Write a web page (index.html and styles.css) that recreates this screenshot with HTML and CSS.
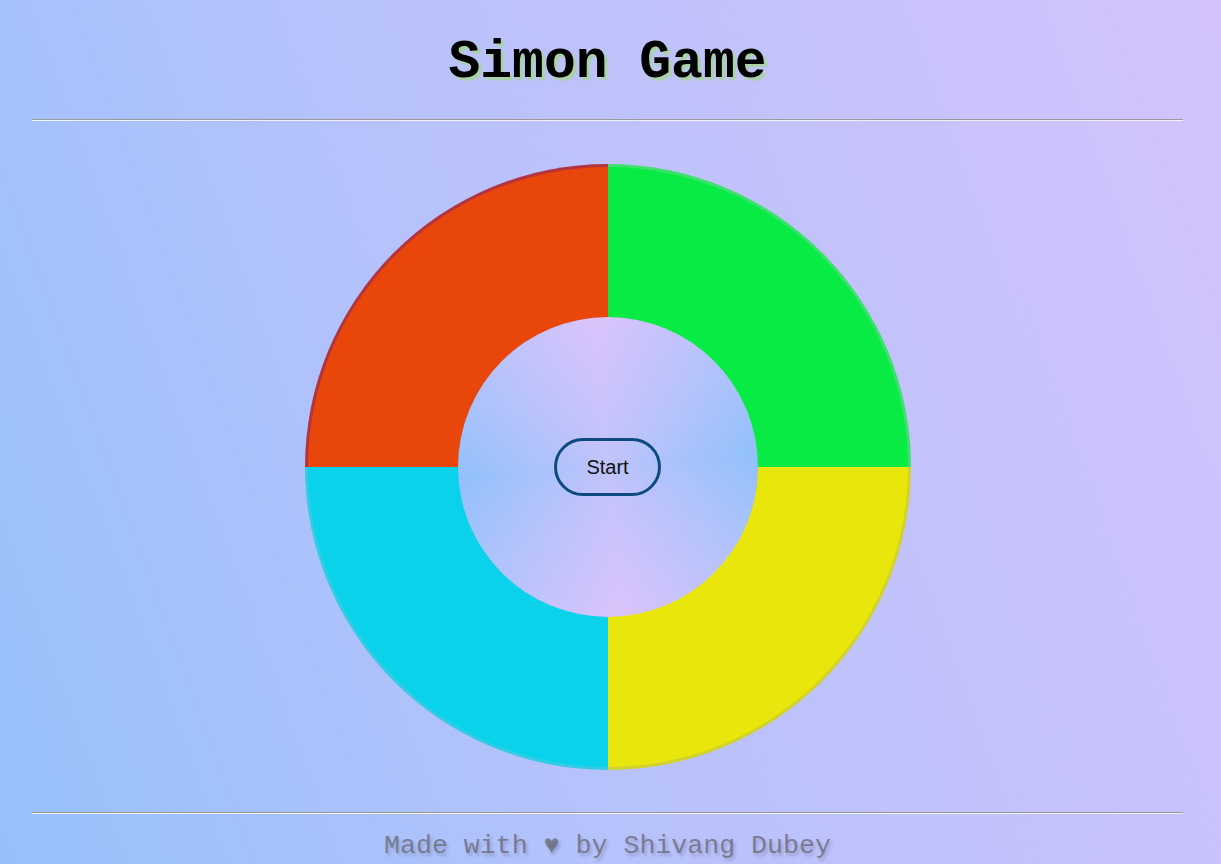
FILE: index.html
```html
<!DOCTYPE html>
<html lang="en">
<head>
<meta charset="utf-8">
<title>Simon Game</title>
<link rel="stylesheet" href="styles.css">
</head>
<body>
<div class="page">
  <h1 class="title">Simon Game</h1>
  <hr class="rule">
  <main class="board-wrap">
    <div class="board">
      <div class="pad pad-red"></div>
      <div class="pad pad-green"></div>
      <div class="pad pad-cyan"></div>
      <div class="pad pad-yellow"></div>
      <div class="hub">
        <button class="start">Start</button>
      </div>
    </div>
  </main>
  <hr class="rule">
  <footer class="footer">Made with ♥ by Shivang Dubey</footer>
</div>
</body>
</html>
```

FILE: styles.css
```css
html, body {
  margin: 0;
  padding: 0;
  height: 100%;
}
body {
  background: linear-gradient(70deg, #95c1fb 0%, #b6c2fb 40%, #c6c2fb 75%, #d4c3fb 100%);
  overflow: hidden;
}
.page {
  padding: 0 38px 0 32px;
  display: flex;
  flex-direction: column;
}
.title {
  margin: 0;
  padding-top: 33px;
  height: 89px;
  box-sizing: border-box;
  text-align: center;
  font-family: "Liberation Mono", "Courier New", monospace;
  font-weight: bold;
  font-size: 53px;
  line-height: 60px;
  color: #000;
  text-shadow: 3px 3px 2px #a9d3a3;
}
.rule {
  margin: 0;
  border: 0;
  border-top: 1px solid #9a9a9a;
  border-bottom: 1px solid #f0f0f0;
  height: 0;
}
.title + .rule {
  margin-top: 30px;
}
.board-wrap {
  display: flex;
  justify-content: center;
  padding: 43px 0 42px;
}
.board {
  position: relative;
  width: 606px;
  height: 606px;
  display: grid;
  grid-template-columns: 1fr 1fr;
  grid-template-rows: 1fr 1fr;
}
.pad {
  box-sizing: border-box;
}
.pad-red {
  background: #e8460a;
  border-top-left-radius: 100%;
  border-top: 3px solid #b3333e;
  border-left: 3px solid #b3333e;
}
.pad-green {
  background: #08eb44;
  border-top-right-radius: 100%;
  border-top: 3px solid #40e070;
  border-right: 3px solid #40e070;
}
.pad-cyan {
  background: #0ad2eb;
  border-bottom-left-radius: 100%;
  border-bottom: 3px solid #35cbe4;
  border-left: 3px solid #35cbe4;
}
.pad-yellow {
  background: #e8e60a;
  border-bottom-right-radius: 100%;
  border-bottom: 3px solid #d2d22e;
  border-right: 3px solid #d2d22e;
}
.hub {
  position: absolute;
  left: 50%;
  top: 50%;
  width: 300px;
  height: 300px;
  margin: -150px 0 0 -150px;
  border-radius: 50%;
  background:
    radial-gradient(circle closest-side, rgba(192, 195, 251, 0.95) 0%, rgba(192, 195, 251, 0.55) 45%, rgba(192, 195, 251, 0) 100%),
    conic-gradient(from -5deg, #dcc3fb 0deg, #b7c3fb 45deg, #90c1fb 90deg, #b7c3fb 135deg, #dcc3fb 180deg, #b7c3fb 225deg, #90c1fb 270deg, #b7c3fb 315deg, #dcc3fb 360deg);
  display: flex;
  align-items: center;
  justify-content: center;
}
.start {
  width: 107px;
  height: 58px;
  box-sizing: border-box;
  border: 3px solid #0e4a80;
  border-radius: 30px;
  background: transparent;
  font-family: "Liberation Sans", Arial, sans-serif;
  font-size: 20px;
  color: #111;
  cursor: pointer;
}
.footer {
  text-align: center;
  font-family: "Liberation Mono", "Courier New", monospace;
  font-size: 26.6px;
  line-height: 36px;
  padding-top: 14px;
  color: rgba(100, 100, 108, 0.72);
  text-shadow: 2px 3px 3px rgba(50, 50, 80, 0.22);
}
```
